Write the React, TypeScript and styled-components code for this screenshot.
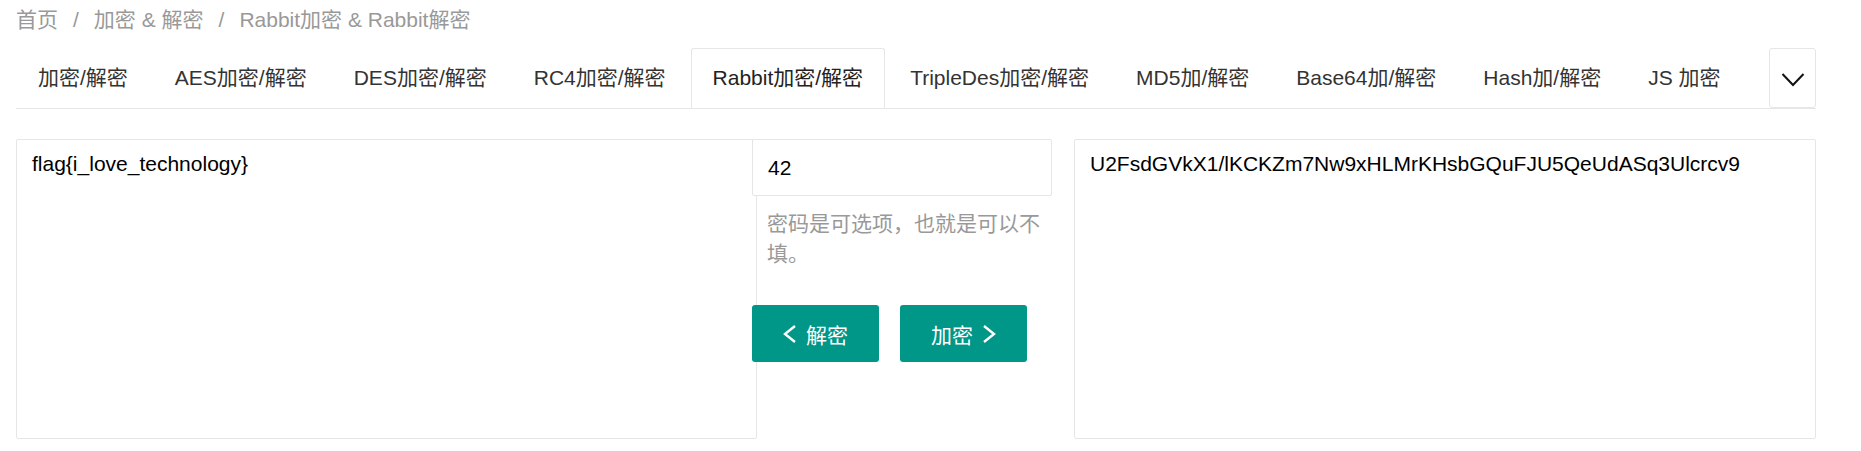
import React from 'react'
import styled, { createGlobalStyle } from 'styled-components'

/////////////////////////////////////////////////////////////////////////////

const GlobalStyle = createGlobalStyle`
  html, body {
    margin: 0;
    padding: 0;
    background: #fff;
  }
  body {
    font-family: 'Liberation Sans', Arial, 'Noto Sans CJK SC', sans-serif;
    font-size: 21px;
    color: #333;
  }
  * {
    box-sizing: border-box;
  }
`

const crumbs = ['首页', '加密 & 解密', 'Rabbit加密 & Rabbit解密']

const tabs = [
  '加密/解密',
  'AES加密/解密',
  'DES加密/解密',
  'RC4加密/解密',
  'Rabbit加密/解密',
  'TripleDes加密/解密',
  'MD5加/解密',
  'Base64加/解密',
  'Hash加/解密',
  'JS 加密',
]

const ChevronDown = () => (
  <svg width='24' height='24' viewBox='0 0 24 24'>
    <polyline
      points='1.5,8 12,19 22.5,8'
      fill='none'
      stroke='#111'
      strokeWidth='2'
    />
  </svg>
)

const Chevron = (props: { dir: 'left' | 'right' }) => (
  <svg width='14' height='18' viewBox='0 0 14 18'>
    <polyline
      points={props.dir === 'left' ? '12,1 2,9 12,17' : '2,1 12,9 2,17'}
      fill='none'
      stroke='#fff'
      strokeWidth='2.4'
    />
  </svg>
)

const App: React.FC = () => {
  const activeTab = 'Rabbit加密/解密'

  return (
    <Page>
      <GlobalStyle />
      <Breadcrumb>
        {crumbs.map((crumb, idx) => (
          <React.Fragment key={idx}>
            {idx > 0 && <Separator>/</Separator>}
            <Crumb>{crumb}</Crumb>
          </React.Fragment>
        ))}
      </Breadcrumb>

      <TabRow>
        <TabList>
          {tabs.map((tab) => (
            <Tab key={tab} $active={tab === activeTab}>
              {tab}
            </Tab>
          ))}
        </TabList>
        <TabMore>
          <ChevronDown />
        </TabMore>
      </TabRow>

      <Content>
        <TextBox $width={741} readOnly defaultValue='flag{i_love_technology}' />
        <Middle>
          <PasswordInput readOnly defaultValue='42' />
          <HelpText>密码是可选项，也就是可以不填。</HelpText>
          <ButtonRow>
            <ActionButton>
              <Chevron dir='left' />
              <span>解密</span>
            </ActionButton>
            <ActionButton>
              <span>加密</span>
              <Chevron dir='right' />
            </ActionButton>
          </ButtonRow>
        </Middle>
        <TextBox
          $grow
          readOnly
          defaultValue='U2FsdGVkX1/lKCKZm7Nw9xHLMrKHsbGQuFJU5QeUdASq3Ulcrcv9'
        />
      </Content>
    </Page>
  )
}

// Styles

const Page = styled.div`
  width: 1816px;
  padding-left: 16px;
`

const Breadcrumb = styled.div`
  height: 40px;
  line-height: 40px;
  font-size: 21px;
  color: #999;
  white-space: nowrap;
`

const Crumb = styled.span`
  color: #999;
`

const Separator = styled.span`
  margin: 0 15px;
  color: #999;
`

const TabRow = styled.div`
  display: flex;
  margin-top: 8px;
  height: 61px;
  border-bottom: 1px solid #e6e6e6;
`

const TabList = styled.div`
  flex: 1;
  display: flex;
  gap: 3px;
  overflow: hidden;
`

const Tab = styled.div<{ $active?: boolean }>`
  flex-shrink: 0;
  height: 60px;
  line-height: 58px;
  padding: 0 21px;
  font-size: 21px;
  color: ${(p) => (p.$active ? '#222' : '#333')};
  white-space: nowrap;
  border: 1px solid ${(p) => (p.$active ? '#e6e6e6' : 'transparent')};
  border-bottom: none;
  border-radius: 3px 3px 0 0;
  background: #fff;
`

const TabMore = styled.div`
  width: 47px;
  height: 60px;
  display: flex;
  align-items: center;
  justify-content: center;
  border: 1px solid #e6e6e6;
  border-radius: 3px;
  background: #fff;
`

const Content = styled.div`
  display: flex;
  align-items: flex-start;
  margin-top: 30px;
`

const TextBox = styled.textarea<{ $width?: number; $grow?: boolean }>`
  ${(p) => (p.$width ? `width: ${p.$width}px;` : '')}
  ${(p) => (p.$grow ? 'flex: 1; margin-left: 22px;' : 'flex-shrink: 0;')}
  height: 300px;
  padding: 9px 15px;
  border: 1px solid #e6e6e6;
  border-radius: 2px;
  font-family: 'Liberation Sans', Arial, 'Noto Sans CJK SC', sans-serif;
  font-size: 21px;
  line-height: 30px;
  color: #000;
  background: #fff;
  resize: none;
  outline: none;
  overflow: hidden;
`

const Middle = styled.div`
  position: relative;
  z-index: 1;
  flex-shrink: 0;
  width: 300px;
  margin-left: -5px;
`

const PasswordInput = styled.input`
  display: block;
  width: 100%;
  height: 57px;
  padding: 0 15px;
  border: 1px solid #e6e6e6;
  border-radius: 2px;
  font-family: 'Liberation Sans', Arial, 'Noto Sans CJK SC', sans-serif;
  font-size: 21px;
  color: #000;
  background: #fff;
  outline: none;
`

const HelpText = styled.div`
  padding: 13px 0 0 15px;
  line-height: 30px;
  font-size: 21px;
  color: #999;
`

const ButtonRow = styled.div`
  display: flex;
  gap: 21px;
  margin-top: 36px;
`

const ActionButton = styled.button`
  width: 127px;
  height: 57px;
  display: flex;
  align-items: center;
  justify-content: center;
  gap: 9px;
  padding: 0;
  border: none;
  border-radius: 3px;
  background: #009688;
  color: #fff;
  font-family: 'Liberation Sans', Arial, 'Noto Sans CJK SC', sans-serif;
  font-size: 21px;
  cursor: pointer;
`

export default App
